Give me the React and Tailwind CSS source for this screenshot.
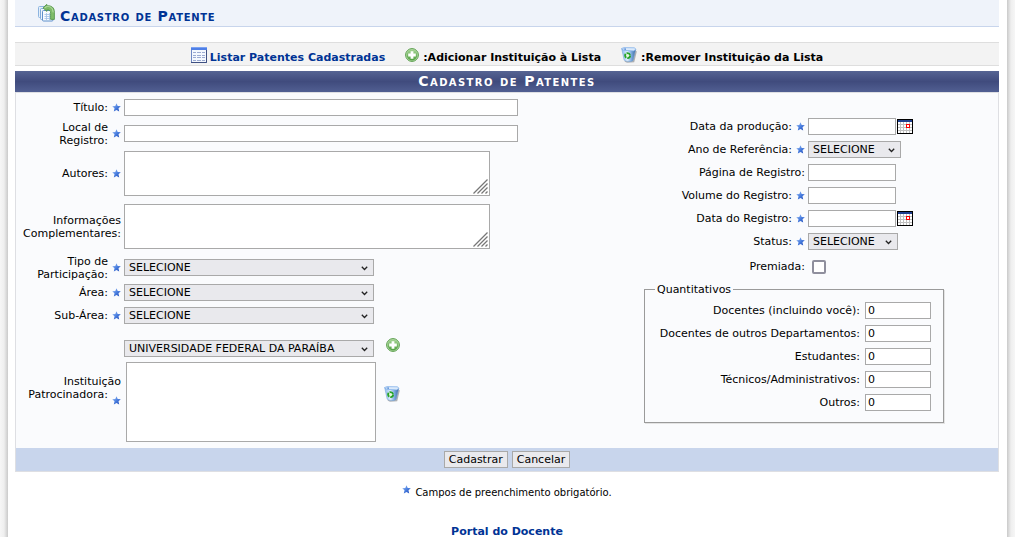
import React from "react";

function Star({ className = "" }) {
  return (
    <svg viewBox="0 0 9 9" className={"h-[9px] w-[9px] shrink-0 " + className} aria-hidden="true">
      <defs>
        <linearGradient id="starFill" x1="0" y1="0" x2="1" y2="1">
          <stop offset="0" stopColor="#a9c8f6" />
          <stop offset="0.5" stopColor="#4a7fe0" />
          <stop offset="1" stopColor="#1c46b4" />
        </linearGradient>
      </defs>
      <path d="M4.5 0.3 5.7 3 8.8 3.3 6.5 5.3 7.2 8.5 4.5 6.9 1.8 8.5 2.5 5.3 0.2 3.3 3.3 3Z" fill="url(#starFill)" />
    </svg>
  );
}

function PagesIcon() {
  return (
    <svg viewBox="0 0 17 18" className="h-[18px] w-[17px] shrink-0" aria-hidden="true">
      <rect x="0.5" y="2.5" width="9" height="11" rx="1" fill="#e3eefa" stroke="#8db4e0" />
      <rect x="2.5" y="4.5" width="10" height="11" rx="1" fill="#edf4fc" stroke="#7ea9da" />
      <rect x="4.5" y="6.5" width="10.5" height="10.5" rx="1" fill="#f8fbfe" stroke="#5f90cb" />
      <path d="M6.5 10.5h7M6.5 12.5h7M6.5 14.5h7M8.5 9v7M11.5 9v7" stroke="#9fc0e6" strokeWidth="0.8" />
      <path d="M5 3.8 8.8 0.3V1.8C13.4 1.4 16.4 3.4 16.4 8.2V15.4H12.6V9.2C12.6 6.8 11.8 5.8 8.8 5.8V7.4Z" fill="#7fbc68" stroke="#4c9142" strokeWidth="0.8" />
      <path d="M6.6 3.8 9.2 2.4C13 2.4 14.9 4.4 15.1 8.4" stroke="#b9dfa8" strokeWidth="1" fill="none" />
    </svg>
  );
}

function ListIcon() {
  return (
    <svg viewBox="0 0 16 16" className="h-4 w-4 shrink-0" aria-hidden="true">
      <rect x="0.5" y="0.5" width="15" height="15" fill="#f4f8fe" stroke="#6f88c4" />
      <rect x="0" y="0" width="16" height="3" fill="#4f7fe6" />
      <rect x="0" y="0" width="16" height="1" fill="#7ba2f2" />
      <path d="M2 5.5h3M6 5.5h4M11 5.5h3M2 8.5h3M6 8.5h4M11 8.5h3M2 10.5h3M6 10.5h4M11 10.5h3M2 13.5h3M6 13.5h4M11 13.5h3" stroke="#9cabd2" strokeWidth="1" />
      <path d="M0 15.5H15.5V3" stroke="#3f5082" strokeWidth="1" fill="none" />
    </svg>
  );
}

function AddIcon() {
  return (
    <svg viewBox="0 0 14 14" className="h-[14px] w-[14px] shrink-0" aria-hidden="true">
      <defs>
        <linearGradient id="addFill" x1="0" y1="0" x2="0" y2="1">
          <stop offset="0" stopColor="#a3d392" />
          <stop offset="1" stopColor="#4f9f3e" />
        </linearGradient>
      </defs>
      <circle cx="7" cy="7" r="6.4" fill="#b9dcac" stroke="#5a9e4c" strokeWidth="1" />
      <circle cx="7" cy="7" r="5.4" fill="url(#addFill)" />
      <path d="M5.6 3.2h2.8v2.4h2.4v2.8H8.4v2.4H5.6V8.4H3.2V5.6h2.4Z" fill="#fff" />
    </svg>
  );
}

function BinIcon() {
  return (
    <svg viewBox="0 0 16 16" className="h-4 w-4 shrink-0" aria-hidden="true">
      <defs>
        <linearGradient id="binFill" x1="0" y1="0" x2="1" y2="0">
          <stop offset="0" stopColor="#8dbcf0" />
          <stop offset="0.4" stopColor="#dcebfb" />
          <stop offset="0.7" stopColor="#7ba9dd" />
          <stop offset="1" stopColor="#38689f" />
        </linearGradient>
      </defs>
      <path d="M3.5 14.5 6 15.8 13.2 15.2 15.8 4.5 14 3Z" fill="#85898f" opacity="0.65" />
      <path d="M0.8 2 3.2 13.2C5.5 15 10 15 12 13.4L14.6 2.6Z" fill="url(#binFill)" stroke="#6b9cd4" strokeWidth="0.5" />
      <path d="M0.4 1.6 3 0.6 13.6 0.8 15 2.4 12.5 3.9 3 3.4Z" fill="#dbeafb" stroke="#79abe8" strokeWidth="0.7" />
      <path d="M2.2 1.8 5 1.4 4.6 3Z" fill="#2f6fcb" />
      <circle cx="6.6" cy="8.6" r="2.5" fill="#e3f5e0" stroke="#27a327" strokeWidth="1.9" strokeDasharray="4.2 1" />
    </svg>
  );
}

function CalendarIcon() {
  return (
    <svg viewBox="0 0 16 15" className="h-[15px] w-4" shapeRendering="crispEdges" aria-hidden="true">
      <rect width="16" height="15" fill="#000" />
      <rect x="1" y="1" width="14" height="13" fill="#fff" />
      <rect x="1" y="1" width="14" height="2" fill="#1f3f8f" />
      <path d="M1 5.5h14M1 8.5h14M1 11.5h14M3.5 3v11M6.5 3v11M9.5 3v11M12.5 3v11" stroke="#c0c0c0" />
      <rect x="9.5" y="5.5" width="3" height="3" fill="#fff" stroke="#f00" />
    </svg>
  );
}

const box = "block h-[17px] border border-[#a9a9a9] bg-white pl-[2px] text-[11px] leading-[13px] ";

function Select({ id, value, className }) {
  return (
    <div className={"relative " + className}>
      <select id={id} className="block h-[17px] w-full appearance-none border border-[#a9a9a9] bg-[#e9e9ed] pr-4 pl-1 text-[11px] leading-[15px]">
        <option>{value}</option>
      </select>
      <svg viewBox="0 0 7 5" className="pointer-events-none absolute top-[7px] right-[6px] h-[5px] w-[7px]" aria-hidden="true">
        <path d="M0.8 0.8 3.5 3.5 6.2 0.8" fill="none" stroke="#222" strokeWidth="1.3" />
      </svg>
    </div>
  );
}

function TextArea({ id }) {
  return (
    <div className="relative w-[366px]">
      <textarea id={id} className="block h-[45px] w-full resize-none border border-[#a9a9a9] bg-white p-[2px] text-[11px]" />
      <svg viewBox="0 0 15 15" className="pointer-events-none absolute right-[2px] bottom-[2px] h-[15px] w-[15px]" aria-hidden="true">
        <path d="M0.5 14.5 14.5 0.5M4.5 14.5 14.5 4.5M8.5 14.5 14.5 8.5M12.5 14.5 14.5 12.5" stroke="#777" strokeWidth="1.3" />
      </svg>
    </div>
  );
}

function Row({ label, id, required, height, labelWidth, children }) {
  return (
    <div className={"flex items-center " + height}>
      <div className={"flex shrink-0 items-center justify-end gap-1 pr-[3px] " + labelWidth}>
        <label htmlFor={id} className="text-right whitespace-pre">{label}</label>
        {required && <Star />}
      </div>
      {children}
    </div>
  );
}

function Left(props) {
  return <Row labelWidth="w-[108px]" {...props} />;
}

function Right(props) {
  return <Row labelWidth="w-[164px]" height="h-[23px]" {...props} />;
}

function DateField({ id }) {
  return (
    <div className="flex items-center gap-px">
      <input id={id} type="text" className={box + "w-[88px]"} />
      <button type="button" aria-label="Abrir calendário"><CalendarIcon /></button>
    </div>
  );
}

const quantities = [
  ["docentes", "Docentes (incluindo você):"],
  ["outrosDeptos", "Docentes de outros Departamentos:"],
  ["estudantes", "Estudantes:"],
  ["tecnicos", "Técnicos/Administrativos:"],
  ["outros", "Outros:"],
];

export default function App() {
  return (
    <div className="flex min-h-screen bg-white font-['Verdana','DejaVu_Sans',sans-serif] text-[11px] leading-[13px] text-black">
      <div className="w-2 shrink-0 bg-linear-to-r from-[#f6f6f6] via-[#efefef] to-[#cacaca]" />
      <div className="min-w-0 flex-1 pr-2 pl-[7px]">
        <header className="flex h-[27px] items-start gap-[5px] border-b border-[#c8d5ec] bg-[#eff3fa] pt-[4px] pl-[23px]">
          <PagesIcon />
          <h2 className="pt-[4px] text-[14px] leading-[17px] font-bold tracking-wider text-[#003395] [font-variant:small-caps]">Cadastro de Patente</h2>
        </header>

        <nav className="mt-[15px] flex h-6 items-center justify-center gap-5 border-y border-[#dedede] bg-[#f3f3f3] pt-[2px] font-bold">
          <a href="#listar" className="flex items-center gap-[3px] text-[#003395]">
            <ListIcon />
            <span className="pt-1">Listar Patentes Cadastradas</span>
          </a>
          <span className="flex items-center gap-1">
            <AddIcon />
            <span className="pt-1">:Adicionar Instituição à Lista</span>
          </span>
          <span className="flex items-center gap-1">
            <BinIcon />
            <span className="pt-1">:Remover Instituição da Lista</span>
          </span>
        </nav>

        <form className="mt-[5px]" onSubmit={(e) => e.preventDefault()}>
          <h3 className="h-[21px] bg-linear-to-b from-[#566493] via-[#404b7d] to-[#515f92] text-center text-[14px] leading-[21px] font-bold tracking-widest text-white [font-variant:small-caps]">Cadastro de Patentes</h3>
          <div className="border border-[#dedfe3] bg-[#fafbfd]">
            <div className="flex justify-between">
              <div className="pt-[3px]">
                <Left label="Título:" id="titulo" required height="h-[23px]">
                  <input id="titulo" type="text" className={box + "w-[394px]"} />
                </Left>
                <Left label={"Local de\nRegistro:"} id="local" required height="h-[29px]">
                  <input id="local" type="text" className={box + "w-[394px]"} />
                </Left>
                <Left label="Autores:" id="autores" required height="h-[51px]">
                  <TextArea id="autores" />
                </Left>
                <Left label={"Informações\nComplementares:"} id="info" height="h-[55px]">
                  <TextArea id="info" />
                </Left>
                <Left label={"Tipo de\nParticipação:"} id="tipo" required height="h-[27px]">
                  <Select id="tipo" value="SELECIONE" className="w-[250px]" />
                </Left>
                <Left label="Área:" id="area" required height="h-[23px]">
                  <Select id="area" value="SELECIONE" className="w-[250px]" />
                </Left>
                <Left label="Sub-Área:" id="subarea" required height="h-[23px]">
                  <Select id="subarea" value="SELECIONE" className="w-[250px]" />
                </Left>
                <div className="flex pt-[10px] pb-[6px]">
                  <div className="flex w-[108px] shrink-0 flex-col justify-center pr-[3px] text-right">
                    <label htmlFor="instituicao">
                      <span className="block">Instituição</span>
                      <span className="flex items-start justify-end gap-1">
                        Patrocinadora:
                        <Star className="mt-2" />
                      </span>
                    </label>
                  </div>
                  <div>
                    <div className="flex items-start gap-3">
                      <div className="pt-[3px]">
                        <Select id="instituicao" value="UNIVERSIDADE FEDERAL DA PARAÍBA" className="w-[250px]" />
                      </div>
                      <button type="button" aria-label="Adicionar Instituição" className="pt-px"><AddIcon /></button>
                    </div>
                    <div className="mt-[5px] flex items-start gap-2 pl-[2px]">
                      <select multiple aria-label="Instituições selecionadas" className="block h-[80px] w-[250px] border border-[#a9a9a9] bg-white" />
                      <button type="button" aria-label="Remover Instituição" className="pt-6"><BinIcon /></button>
                    </div>
                  </div>
                </div>
              </div>

              <div className="mr-[54px] w-[300px] pt-[22px]">
                <Right label="Data da produção:" id="dataProducao" required>
                  <DateField id="dataProducao" />
                </Right>
                <Right label="Ano de Referência:" id="ano" required>
                  <Select id="ano" value="SELECIONE" className="w-[93px]" />
                </Right>
                <Right label="Página de Registro:" id="pagina">
                  <input id="pagina" type="text" className={box + "w-[88px]"} />
                </Right>
                <Right label="Volume do Registro:" id="volume" required>
                  <input id="volume" type="text" className={box + "w-[88px]"} />
                </Right>
                <Right label="Data do Registro:" id="dataRegistro" required>
                  <DateField id="dataRegistro" />
                </Right>
                <Right label="Status:" id="status" required>
                  <Select id="status" value="SELECIONE" className="w-[90px]" />
                </Right>
                <Right label="Premiada:" id="premiada" height="h-[27px]">
                  <input id="premiada" type="checkbox" className="ml-1 h-[14px] w-[14px] appearance-none rounded-[2px] border-2 border-[#8f8f9d] bg-white checked:bg-[#0060df]" />
                </Right>
                <fieldset className="mt-[3px] border border-[#9a9a9a] pr-3 pb-2 shadow-[1px_1px_0_#e3e3e3]">
                  <legend className="ml-[10px] px-[2px]">Quantitativos</legend>
                  <div className="pt-[3px]">
                    {quantities.map(([id, label]) => (
                      <div key={id} className="flex h-[23px] items-center justify-end gap-[5px]">
                        <label htmlFor={id}>{label}</label>
                        <input id={id} type="text" defaultValue="0" className={box + "w-[66px]"} />
                      </div>
                    ))}
                  </div>
                </fieldset>
              </div>
            </div>
            <div className="flex h-[23px] items-center justify-center gap-1 bg-[#c8d5ec]">
              <button type="submit" className="h-[17px] border border-[#a9a9a9] bg-[#e9e9ed] px-1 leading-[15px]">Cadastrar</button>
              <button type="button" className="h-[17px] border border-[#a9a9a9] bg-[#e9e9ed] px-1 leading-[15px]">Cancelar</button>
            </div>
          </div>
        </form>

        <p className="mt-[13px] flex items-start justify-center gap-1 text-[10px]">
          <Star />
          <span className="pt-px">Campos de preenchimento obrigatório.</span>
        </p>
        <p className="mt-[26px] text-center font-bold">
          <a href="#portal" className="text-[#003395]">Portal do Docente</a>
        </p>
      </div>
      <div className="w-2 shrink-0 bg-linear-to-l from-[#f6f6f6] via-[#efefef] to-[#cacaca]" />
    </div>
  );
}
